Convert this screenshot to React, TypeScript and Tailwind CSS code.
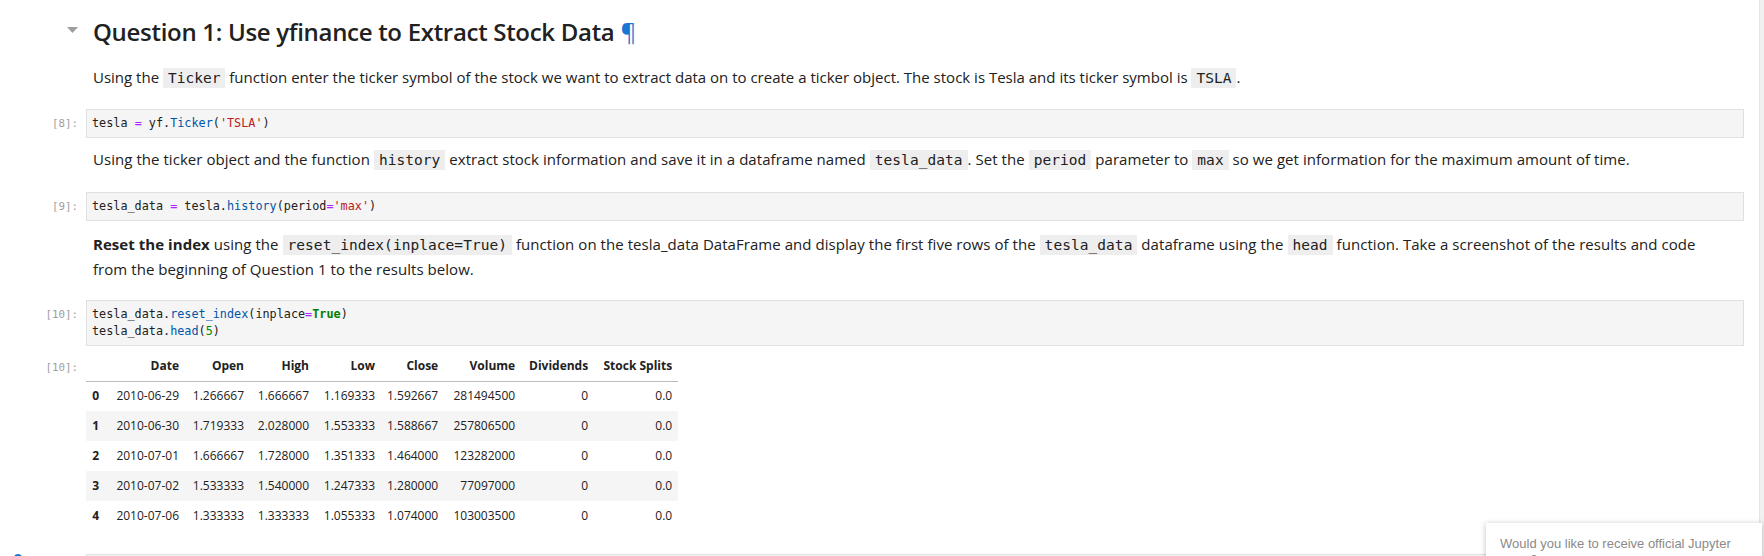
import React from "react";

const sans = "font-['Open_Sans','Noto_Sans',sans-serif]";
const mono = "font-['DejaVu_Sans_Mono','Liberation_Mono',monospace]";

function Chip({ children }: { children: React.ReactNode }) {
  return (
    <code className={`${mono} text-[14.5px] bg-[#eeeeee] px-[5px] py-[2px] text-[#212121]`}>
      {children}
    </code>
  );
}

function Prompt({ n }: { n: string }) {
  return (
    <div className={`${mono} w-[86px] shrink-0 pr-[8px] text-right text-[10.8px] text-[#9e9e9e] leading-[17px] pt-[6px]`}>
      [{n}]:
    </div>
  );
}

function CodeCell({ n, children }: { n: string; children: React.ReactNode }) {
  return (
    <div className="flex">
      <Prompt n={n} />
      <div className={`${mono} flex-1 bg-[#f5f5f5] border border-[#e0e0e0] px-[5px] py-[5px] text-[11.8px] leading-[17px] text-[#212121] whitespace-pre`}>
        {children}
      </div>
    </div>
  );
}

const op = "text-[#aa22ff]";
const prop = "text-[#0055aa]";
const str = "text-[#ba2121]";
const num = "text-[#008800]";
const kw = "text-[#008000] font-bold";

const rows = [
  ["0", "2010-06-29", "1.266667", "1.666667", "1.169333", "1.592667", "281494500", "0", "0.0"],
  ["1", "2010-06-30", "1.719333", "2.028000", "1.553333", "1.588667", "257806500", "0", "0.0"],
  ["2", "2010-07-01", "1.666667", "1.728000", "1.351333", "1.464000", "123282000", "0", "0.0"],
  ["3", "2010-07-02", "1.533333", "1.540000", "1.247333", "1.280000", "77097000", "0", "0.0"],
  ["4", "2010-07-06", "1.333333", "1.333333", "1.055333", "1.074000", "103003500", "0", "0.0"],
];
const headers = ["", "Date", "Open", "High", "Low", "Close", "Volume", "Dividends", "Stock Splits"];
const widths = [19, 80, 65, 65, 66, 63, 77, 73, 84];

export default function App() {
  return (
    <div className={`relative w-[1764px] h-[556px] overflow-hidden bg-white flex text-[#212121] ${sans}`}>
      <div className="flex-1 flex flex-col pr-[15px]">
        {/* heading */}
        <div className="flex mt-[15px]">
          <div className="w-[93px] shrink-0 flex pl-[67px] pt-[12px]">
            <svg width="11" height="6" viewBox="0 0 11 6">
              <path d="M0 0 L11 0 L5.5 6 Z" fill="#9e9e9e" />
            </svg>
          </div>
          <h1 className="text-[24px] leading-[34px] font-semibold tracking-[-0.3px]">
            Question 1: Use yfinance to Extract Stock Data{" "}
            <span className="text-[#1976d2] font-normal">¶</span>
          </h1>
        </div>

        {/* p1 */}
        <p className="ml-[93px] mt-[16px] text-[15px] leading-[24px]">
          Using the <Chip>Ticker</Chip> function enter the ticker symbol of the stock we want to extract data on to
          create a ticker object. The stock is Tesla and its ticker symbol is <Chip>TSLA</Chip>.
        </p>

        <div className="mt-[19px]">
          <CodeCell n="8">
            tesla <span className={op}>=</span> yf.<span className={prop}>Ticker</span>(<span className={str}>'TSLA'</span>)
          </CodeCell>
        </div>

        {/* p2 */}
        <p className="ml-[93px] mt-[9px] text-[15px] leading-[24px] whitespace-nowrap tracking-[0.05px]">
          Using the ticker object and the function <Chip>history</Chip> extract stock information and save it in a
          dataframe named <Chip>tesla_data</Chip>. Set the <Chip>period</Chip> parameter to <Chip>max</Chip> so we get
          information for the maximum amount of time.
        </p>

        <div className="mt-[20px]">
          <CodeCell n="9">
            tesla_data <span className={op}>=</span> tesla.<span className={prop}>history</span>(period<span className={op}>=</span><span className={str}>'max'</span>)
          </CodeCell>
        </div>

        {/* p3 */}
        <p className="ml-[93px] mt-[11px] text-[15px] leading-[24px] whitespace-nowrap tracking-[0.05px]">
          <strong className="font-bold">Reset the index</strong> using the <Chip>reset_index(inplace=True)</Chip> function
          on the tesla_data DataFrame and display the first five rows of the <Chip>tesla_data</Chip> dataframe using the{" "}
          <Chip>head</Chip> function. Take a screenshot of the results and code
          <br />
          from the beginning of Question 1 to the results below.
        </p>

        <div className="mt-[19px]">
          <CodeCell n="10">
            {"tesla_data."}
            <span className={prop}>reset_index</span>(inplace<span className={op}>=</span><span className={kw}>True</span>)
            {"\ntesla_data."}
            <span className={prop}>head</span>(<span className={num}>5</span>)
          </CodeCell>
        </div>

        {/* output */}
        <div className="flex mt-[6px]">
          <div className={`${mono} w-[86px] shrink-0 pr-[8px] text-right text-[10.8px] text-[#9e9e9e] leading-[17px] pt-[7px]`}>
            [10]:
          </div>
          <table className="text-[12px] border-collapse table-fixed text-[#212121]">
            <thead>
              <tr className="h-[29px] border-b border-[#bdbdbd]">
                {headers.map((h, i) => (
                  <th key={i} style={{ width: widths[i] }} className="text-right font-bold px-[6px] whitespace-nowrap align-middle">
                    {h}
                  </th>
                ))}
              </tr>
            </thead>
            <tbody>
              {rows.map((r, ri) => (
                <tr key={ri} className={`h-[30px] ${ri % 2 === 1 ? "bg-[#f5f5f5]" : ""}`}>
                  {r.map((c, ci) => (
                    <td
                      key={ci}
                      className={`text-right px-[6px] whitespace-nowrap align-middle ${ci === 0 ? "font-bold" : ""}`}
                    >
                      {c}
                    </td>
                  ))}
                </tr>
              ))}
            </tbody>
          </table>
        </div>

        {/* next cell */}
        <div className="flex mt-[23px]">
          <div className="w-[86px] shrink-0 pl-[14px]">
            <div className="w-[8px] h-[8px] rounded-t-[4px] bg-[#1976d2]" />
          </div>
          <div className="flex-1 h-[20px] border-t border-l border-r border-[#e0e0e0] bg-[#f5f5f5]" />
        </div>
      </div>

      {/* scrollbar strip */}
      <div className="w-[5px] shrink-0 bg-[#f0f0f0] border-l border-[#e6e6e6]" />

      {/* notification popup */}
      <div className="absolute left-[1486px] top-[523px] w-[276px] h-[80px] bg-white shadow-[0_1px_6px_rgba(0,0,0,0.25)] px-[14px] pt-[13px]">
        <p className="font-['Liberation_Sans',Arial,sans-serif] text-[13px] leading-[16px] text-[#8a8a8a]">
          Would you like to receive official Jupyter news?
        </p>
      </div>
    </div>
  );
}
